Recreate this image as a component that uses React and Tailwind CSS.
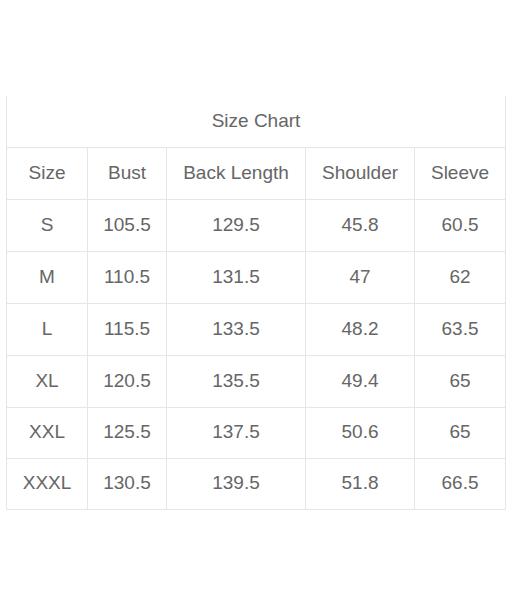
import React from 'react';

const headers = ['Size', 'Bust', 'Back Length', 'Shoulder', 'Sleeve'];
const rows = [
    ['S', '105.5', '129.5', '45.8', '60.5'],
    ['M', '110.5', '131.5', '47', '62'],
    ['L', '115.5', '133.5', '48.2', '63.5'],
    ['XL', '120.5', '135.5', '49.4', '65'],
    ['XXL', '125.5', '137.5', '50.6', '65'],
    ['XXXL', '130.5', '139.5', '51.8', '66.5'],
];

const App = () => {
    return (
        <div className="w-[510px] h-[600px] bg-white pt-[96px] pl-[6px] font-['Liberation_Sans',Arial,sans-serif] text-[19px] text-[#666]">
            <table className="w-[499px] border-collapse table-fixed">
                <colgroup>
                    <col className="w-[81px]" />
                    <col className="w-[79px]" />
                    <col className="w-[139px]" />
                    <col className="w-[109px]" />
                    <col className="w-[91px]" />
                </colgroup>
                <thead>
                    <tr>
                        <th colSpan={5} className="h-[51px] border-x border-b border-[#e6e6e6] font-normal text-center">
                            Size Chart
                        </th>
                    </tr>
                    <tr>
                        {headers.map((h) => (
                            <th key={h} className="h-[52px] border border-[#e6e6e6] font-normal text-center whitespace-nowrap">
                                {h}
                            </th>
                        ))}
                    </tr>
                </thead>
                <tbody>
                    {rows.map((row, r) => (
                        <tr key={row[0]}>
                            {row.map((cell, i) => (
                                <td
                                    key={i}
                                    className={`${r >= 4 ? 'h-[51px]' : 'h-[52px]'} border border-[#e6e6e6] text-center`}
                                >
                                    {cell}
                                </td>
                            ))}
                        </tr>
                    ))}
                </tbody>
            </table>
        </div>
    );
};

export default App;
